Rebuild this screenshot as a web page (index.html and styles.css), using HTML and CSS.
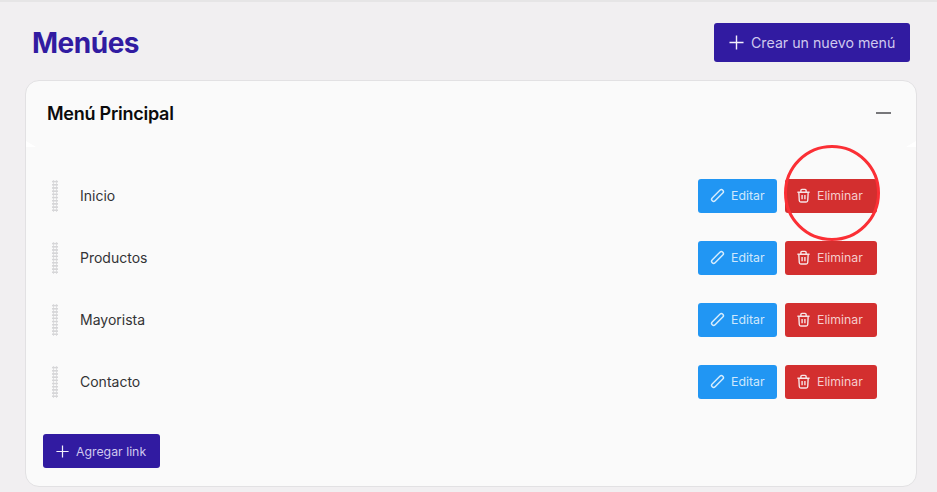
FILE: index.html
```html
<!DOCTYPE html>
<html lang="en">
<head>
    <meta charset="UTF-8">
    <meta name="viewport" content="width=device-width, initial-scale=1.0">
    <title>Menúes</title>
    <link rel="stylesheet" href="styles.css">
</head>
<body>
    <svg class="icon-defs">
        <symbol id="pencil" viewBox="0 0 16 16">
            <rect x="-2.200" y="-8" width="4.400" height="16" rx="2.200" transform="translate(8 8) rotate(45)"/>
        </symbol>
        <symbol id="trash" viewBox="0 0 16 16">
            <path d="M1.500 4.500h13M5.200 4.500V2.600q0-1.100 1.100-1.100h3.400q1.100 0 1.100 1.100v1.900M3 4.500l.5 8.900q.1 1.600 1.600 1.600h5.800q1.500 0 1.600-1.600l.5-8.900M6.500 7.500v4.500M9.500 7.500v4.500"/>
        </symbol>
    </svg>

    <div class="page">
        <div class="page-head">
            <h1>Menúes</h1>
            <button class="btn btn-primary btn-new">
                <svg class="icon-plus" viewBox="0 0 16 16"><path d="M8 .5v15M.5 8h15"/></svg>
                Crear un nuevo menú
            </button>
        </div>

        <div class="card">
            <div class="card-head">
                <h2>Menú Principal</h2>
                <span class="collapse-icon"></span>
            </div>

            <div class="link-list">
                <div class="link-row">
                    <span class="drag-handle"></span>
                    <span class="link-name">Inicio</span>
                    <button class="btn btn-edit"><svg class="icon"><use href="#pencil"/></svg>Editar</button>
                    <button class="btn btn-delete"><svg class="icon"><use href="#trash"/></svg>Eliminar</button>
                </div>
                <div class="link-row">
                    <span class="drag-handle"></span>
                    <span class="link-name">Productos</span>
                    <button class="btn btn-edit"><svg class="icon"><use href="#pencil"/></svg>Editar</button>
                    <button class="btn btn-delete"><svg class="icon"><use href="#trash"/></svg>Eliminar</button>
                </div>
                <div class="link-row">
                    <span class="drag-handle"></span>
                    <span class="link-name">Mayorista</span>
                    <button class="btn btn-edit"><svg class="icon"><use href="#pencil"/></svg>Editar</button>
                    <button class="btn btn-delete"><svg class="icon"><use href="#trash"/></svg>Eliminar</button>
                </div>
                <div class="link-row">
                    <span class="drag-handle"></span>
                    <span class="link-name">Contacto</span>
                    <button class="btn btn-edit"><svg class="icon"><use href="#pencil"/></svg>Editar</button>
                    <button class="btn btn-delete"><svg class="icon"><use href="#trash"/></svg>Eliminar</button>
                </div>
            </div>

            <button class="btn btn-primary btn-add">
                <svg class="icon-plus" viewBox="0 0 16 16"><path d="M8 .5v15M.5 8h15"/></svg>
                Agregar link
            </button>
        </div>
    </div>

    <div class="highlight-circle"></div>
</body>
</html>
```

FILE: styles.css
```css
html, body {
    height: 100%;
}
body {
    margin: 0;
    font-family: Inter, sans-serif;
    background-color: #f1eff1;
    overflow: hidden;
}
.icon-defs {
    display: none;
}
.page {
    border-top: 2px solid #e6e5e6;
    padding: 21px 20px 0 25px;
}
.page-head {
    display: flex;
    justify-content: space-between;
    align-items: center;
    height: 39px;
    padding: 0 7px;
}
h1 {
    margin: 0;
    font-size: 28px;
    font-weight: 700;
    letter-spacing: -0.5px;
    color: #311ba1;
}
.btn {
    display: flex;
    align-items: center;
    border: 1px solid transparent;
    border-radius: 3px;
    font-family: inherit;
    font-size: 12.300px;
    box-sizing: border-box;
    cursor: pointer;
}
.btn-primary {
    background-color: #311ba1;
    color: #cfc8ee;
}
.btn-new {
    width: 196px;
    height: 39px;
    padding: 0 0 0 14px;
    gap: 7px;
    font-size: 14.200px;
}
.btn-new .icon-plus {
    width: 15px;
    height: 15px;
}
.icon-plus {
    fill: none;
    stroke: #f3f1fb;
    stroke-width: 1.500;
}
.card {
    position: relative;
    margin-top: 18px;
    height: 407px;
    box-sizing: border-box;
    background-color: #fafafa;
    border: 1px solid #e2e1e3;
    border-radius: 14px;
    padding: 0 17px;
}
/* little white corners where the accordion body starts */
.card::before, .card::after {
    content: "";
    position: absolute;
    top: 60px;
    width: 10px;
    height: 6px;
    background-color: #fff;
}
.card::before {
    left: 0;
    clip-path: polygon(0 0, 100% 100%, 0 100%);
}
.card::after {
    right: 0;
    clip-path: polygon(100% 0, 100% 100%, 0 100%);
}
.card-head {
    display: flex;
    justify-content: space-between;
    align-items: center;
    height: 64px;
    padding: 0 8px 0 4px;
}
h2 {
    margin: 0;
    font-size: 18px;
    font-weight: 600;
    color: #0b0b0c;
    letter-spacing: -0.25px;
}
.collapse-icon {
    width: 15px;
    height: 1.500px;
    background-color: #77777a;
}
.link-list {
    padding-top: 20px;
}
.link-row {
    display: flex;
    align-items: center;
    height: 62px;
    gap: 8px;
    padding: 0 22px 0 9px;
}
.drag-handle {
    width: 6px;
    height: 32px;
    background-image: radial-gradient(#d6d6d8 1.100px, transparent 1.200px);
    background-size: 3px 3.200px;
}
.link-name {
    flex: 1;
    margin-left: 14px;
    padding-bottom: 2px;
    font-size: 14px;
    color: #333335;
}
.btn-edit, .btn-delete {
    height: 34px;
    gap: 6px;
    padding: 0 11px 2px;
}
.btn-edit {
    width: 79px;
    background-color: #2196f3;
    color: #cfe8fc;
}
.btn-delete {
    width: 92px;
    padding-left: 10px;
    background-color: #d32f2f;
    color: #f6cccc;
}
.icon {
    width: 15px;
    height: 15px;
    fill: none;
    stroke: #f6e4e6;
    stroke-width: 1.500;
    flex-shrink: 0;
}
.btn-edit .icon {
    stroke: #d8edfd;
}
.btn-add {
    margin-top: 21px;
    width: 117px;
    height: 34px;
    padding: 0 0 0 12px;
    gap: 7px;
}
.btn-add .icon-plus {
    width: 13px;
    height: 13px;
}
.highlight-circle {
    position: absolute;
    left: 784px;
    top: 145px;
    width: 96px;
    height: 96px;
    box-sizing: border-box;
    border: 3px solid #fb2f35;
    border-radius: 50%;
}
```
